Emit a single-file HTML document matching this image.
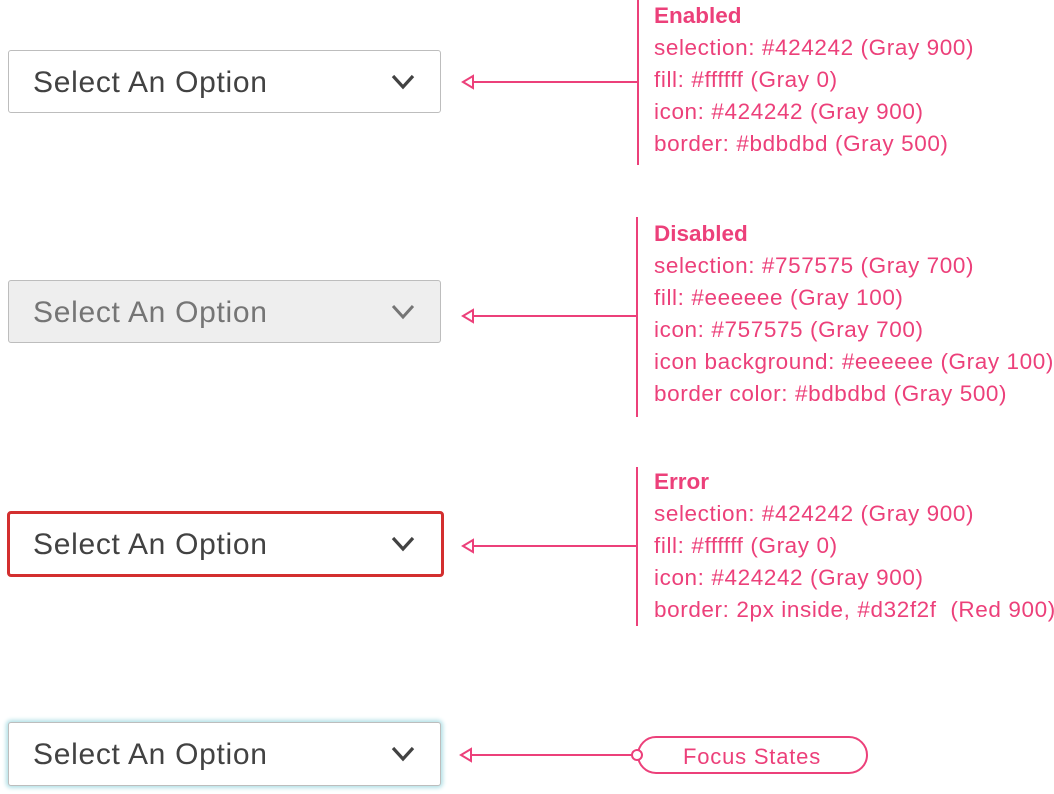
<!DOCTYPE html>
<html><head><style>
body{margin:0;width:1054px;height:794px;background:#fff;position:relative;font-family:"Liberation Sans",Arial,sans-serif;overflow:hidden}
.box{position:absolute;left:8px;width:431px;height:61px;border:1px solid #bdbdbd;border-radius:3px;background:#fff;box-sizing:content-box}
.box span{position:absolute;left:24px;top:15px;font-size:30px;color:#424242;letter-spacing:0.7px;white-space:nowrap}
.box svg{position:absolute;left:381px;top:22px}
.ann{position:absolute;left:654px;color:#ec407a;font-size:22.5px;line-height:32px;letter-spacing:0.6px;white-space:nowrap}
.ann b{font-weight:bold;letter-spacing:0}
</style></head><body>

<div class="box" style="top:50px"><span>Select An Option</span><svg width="26" height="18"><path d="M3 3 L13 14 L23 3" stroke="#424242" stroke-width="3.2" fill="none"/></svg></div>
<div class="box" style="top:280px;background:#eeeeee"><span style="color:#757575">Select An Option</span><svg width="26" height="18"><path d="M3 3 L13 14 L23 3" stroke="#757575" stroke-width="3" fill="none"/></svg></div>
<div class="box" style="top:511px;left:7px;width:431px;height:60px;border:3px solid #d32f2f;border-radius:4px"><span style="top:14px;left:23px">Select An Option</span><svg width="26" height="18" style="left:380px;top:21px"><path d="M3 3 L13 14 L23 3" stroke="#424242" stroke-width="3.2" fill="none"/></svg></div>
<div class="box" style="top:722px;height:62px;border-color:#bdbdbd;box-shadow:0 0 4px 2px #b2e0e6"><span>Select An Option</span><svg width="26" height="18"><path d="M3 3 L13 14 L23 3" stroke="#424242" stroke-width="3.2" fill="none"/></svg></div>

<svg width="1054" height="794" style="position:absolute;left:0;top:0">
<g stroke="#ec407a" stroke-width="2" fill="#fff">
<line x1="638" y1="0" x2="638" y2="165"/><line x1="472" y1="82" x2="638" y2="82"/><path d="M463 82 L473 76 L473 88 Z"/>
<line x1="637" y1="217" x2="637" y2="417"/><line x1="472" y1="316" x2="637" y2="316"/><path d="M463 316 L473 310 L473 322 Z"/>
<line x1="637" y1="467" x2="637" y2="626"/><line x1="472" y1="546" x2="637" y2="546"/><path d="M463 546 L473 540 L473 552 Z"/>
<line x1="472" y1="755" x2="632" y2="755"/><path d="M461 755 L471 749 L471 761 Z"/>
<rect x="638" y="737" width="229" height="36" rx="18"/>
<circle cx="637" cy="755" r="5"/>
</g>
<text x="752" y="764" text-anchor="middle" fill="#ec407a" font-family="Liberation Sans, Arial, sans-serif" font-size="22" letter-spacing="0.8">Focus States</text>
</svg>

<div class="ann" style="top:0px"><b>Enabled</b><br>selection: #424242 (Gray 900)<br>fill: #ffffff (Gray 0)<br>icon: #424242 (Gray 900)<br>border: #bdbdbd (Gray 500)</div>
<div class="ann" style="top:218px"><b>Disabled</b><br>selection: #757575 (Gray 700)<br>fill: #eeeeee (Gray 100)<br>icon: #757575 (Gray 700)<br>icon background: #eeeeee (Gray 100)<br>border color: #bdbdbd (Gray 500)</div>
<div class="ann" style="top:466px"><b>Error</b><br>selection: #424242 (Gray 900)<br>fill: #ffffff (Gray 0)<br>icon: #424242 (Gray 900)<br>border: 2px inside, #d32f2f&nbsp; (Red 900)</div>
</body></html>
